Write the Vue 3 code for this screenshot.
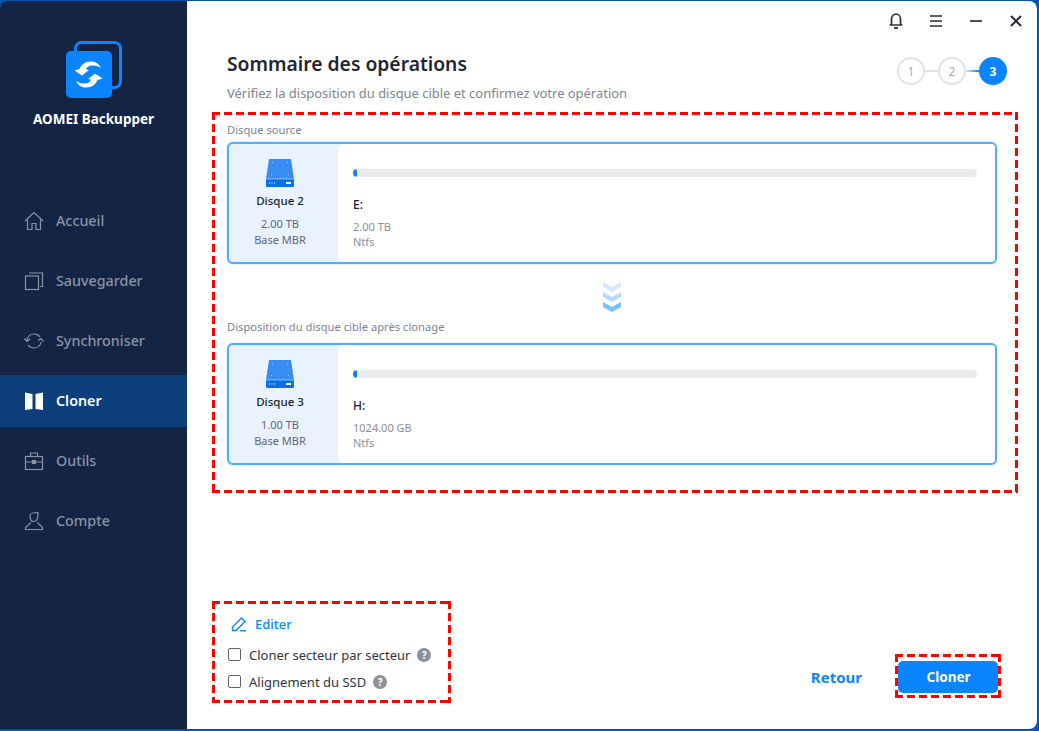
<script setup>
const nav = [
  { label: 'Accueil', icon: 'home' },
  { label: 'Sauvegarder', icon: 'backup' },
  { label: 'Synchroniser', icon: 'sync' },
  { label: 'Cloner', icon: 'clone', active: true },
  { label: 'Outils', icon: 'tools' },
  { label: 'Compte', icon: 'user' },
]
const disks = [
  { caption: 'Disque source', name: 'Disque 2', size: '2.00 TB', letter: 'E:', used: '2.00 TB' },
  { caption: 'Disposition du disque cible après clonage', name: 'Disque 3', size: '1.00 TB', letter: 'H:', used: '1024.00 GB' },
]
</script>

<template>
  <div class="window">
    <aside class="sidebar">
      <div class="brand">
        <svg class="logo" width="58" height="58" viewBox="0 0 58 58">
          <rect x="10.500" y="1.500" width="45" height="45" rx="6" fill="none" stroke="#0a84ff" stroke-width="3" />
          <rect x="1" y="10" width="46" height="47" rx="5" fill="#0a84ff" />
          <path d="M9.500 29.500 14.500 28C16 24 20 20.500 26 20.500 31 20.500 34 23 36 27 33 25 30 24.500 27 24.500 24 24.500 22 26 21 28.500L24 29 17 34.500z" fill="#fff" />
          <path d="M9.500 29.500 14.500 28C16 24 20 20.500 26 20.500 31 20.500 34 23 36 27 33 25 30 24.500 27 24.500 24 24.500 22 26 21 28.500L24 29 17 34.500z" fill="#fff" transform="rotate(180 23.500 33.500)" />
        </svg>
        <div class="brand-name">AOMEI Backupper</div>
      </div>
      <nav class="nav">
        <div v-for="item in nav" :key="item.label" class="nav-item" :class="{ active: item.active }">
          <svg width="20" height="20" viewBox="0 0 20 20" fill="none" stroke="currentColor" stroke-width="1.200" class="nav-icon">
            <template v-if="item.icon === 'home'">
              <path d="M1 10 10 1.500 19 10" />
              <path d="M3.500 8.500V18.500H8V12.500H12V18.500H16.500V8.500" />
            </template>
            <template v-else-if="item.icon === 'backup'">
              <rect x="1.500" y="5" width="13" height="13.500" />
              <path d="M5 2h13.500v13.500H16" />
            </template>
            <template v-else-if="item.icon === 'sync'">
              <path d="M3 9.500C3.500 5.500 6.500 3 10 3c2.500 0 4.500 1 6 3" />
              <path d="M17 11c-.5 3.500-3.500 6-7 6-2.500 0-4.500-1-6-3" />
              <path d="M.5 7.500 3 10.500l3-2.500M14 9.500l3-2 2.500 3" />
            </template>
            <template v-else-if="item.icon === 'clone'">
              <path d="M1 1.500 8.500 3V18L1 19z" fill="currentColor" stroke="none" />
              <path d="M19 1.500 11.500 3V18L19 19z" fill="currentColor" stroke="none" />
            </template>
            <template v-else-if="item.icon === 'tools'">
              <rect x="1.500" y="5.500" width="17" height="13" />
              <path d="M6.500 5.500v-3.500h7v3.500M1.500 11h17" />
              <rect x="8.500" y="9.500" width="3" height="3" fill="currentColor" />
            </template>
            <template v-else>
              <path d="M6 4.500C6 3 8 1.500 14 1.500c0 6-.5 9-4.500 9C7 10.500 6 8 6 4.500z" />
              <path d="M7 11.500 1.500 16.500v2h17v-2l-5-5" />
            </template>
          </svg>
          <span>{{ item.label }}</span>
        </div>
      </nav>
    </aside>

    <main class="main">
      <div class="titlebar">
        <svg width="14" height="16" viewBox="0 0 14 16" fill="none" stroke="#2f2d3a" stroke-width="1.700">
          <path d="M.500 12h13M2.500 12V6a4.500 5 0 0 1 9 0v6" />
          <path d="M5 15h4" stroke-width="1.800" />
        </svg>
        <svg width="14" height="14" viewBox="0 0 14 14" stroke="#2f2d3a" stroke-width="1.700">
          <path d="M1 2h12M1 7h12M1 12h12" />
        </svg>
        <svg width="14" height="14" viewBox="0 0 14 14" stroke="#2f2d3a" stroke-width="1.700">
          <path d="M1 7h12" />
        </svg>
        <svg width="14" height="14" viewBox="0 0 14 14" stroke="#2f2d3a" stroke-width="2">
          <path d="M2 2l10 10M12 2 2 12" />
        </svg>
      </div>

      <header class="heading">
        <div>
          <h1>Sommaire des opérations</h1>
          <p>Vérifiez la disposition du disque cible et confirmez votre opération</p>
        </div>
        <div class="steps">
          <span class="step">1</span>
          <i class="link"></i>
          <span class="step">2</span>
          <i class="link current"></i>
          <span class="step on">3</span>
        </div>
      </header>

      <section class="disks dashed">
        <template v-for="(disk, i) in disks" :key="disk.name">
          <div class="caption">{{ disk.caption }}</div>
          <div class="card">
            <div class="card-left">
              <svg width="30" height="30" viewBox="0 0 30 30">
                <path d="M4 1h22L29 21H1z" fill="#3a8cf2" />
                <rect x="1" y="20" width="28" height="9" rx="1" fill="#0a6fe8" />
                <rect x="1" y="20" width="28" height="1.500" fill="#6ab0ff" />
                <rect x="21" y="24" width="5" height="2" fill="#fff" />
                <path d="M4 24h1v2H4zM6.500 24h1v2h-1zM9 24h1v2H9z" fill="#8cc4ff" />
                <path d="M7 4h1v1H7zM22 4h1v1h-1zM6 16h1v1H6zM23 16h1v1h-1z" fill="#a9d2ff" />
              </svg>
              <div class="disk-name">{{ disk.name }}</div>
              <div class="disk-meta">{{ disk.size }}</div>
              <div class="disk-meta">Base MBR</div>
            </div>
            <div class="card-right">
              <div class="bar"><b></b></div>
              <div class="letter">{{ disk.letter }}</div>
              <div class="info">{{ disk.used }}</div>
              <div class="info">Ntfs</div>
            </div>
          </div>
          <svg v-if="i === 0" class="arrows" width="20" height="30" viewBox="0 0 20 30">
            <path d="M1 0 10 5 19 0V5L10 10 1 5z" fill="#d3e9ff" />
            <path d="M1 10 10 15 19 10V15L10 20 1 15z" fill="#b5dcff" />
            <path d="M1 20 10 25 19 20V25L10 30 1 25z" fill="#79c0ff" />
          </svg>
        </template>
      </section>

      <footer class="footer">
        <div class="options dashed">
          <div class="edit">
            <svg width="16" height="16" viewBox="0 0 16 16" fill="none" stroke="#0a84ff" stroke-width="1.400">
              <path d="M1.500 14.500V11L10.500 2l3.500 3.500-9 9z" />
              <path d="M9 14.800h6" />
            </svg>
            <span>Editer</span>
          </div>
          <label class="check"><i class="box"></i>Cloner secteur par secteur<i class="help">?</i></label>
          <label class="check"><i class="box"></i>Alignement du SSD<i class="help">?</i></label>
        </div>
        <div class="actions">
          <span class="back">Retour</span>
          <div class="primary-wrap dashed"><button class="primary">Cloner</button></div>
        </div>
      </footer>
    </main>
  </div>
</template>

<style>
html, body { margin: 0; padding: 0; background: #fff; }
</style>

<style scoped>
.window {
  width: 1039px;
  height: 731px;
  box-sizing: border-box;
  display: flex;
  background: #0b52ab;
  padding: 1px 2px 2px 0;
  font-family: "Noto Sans", "Open Sans", sans-serif;
  overflow: hidden;
}
.dashed {
  background-image:
    repeating-linear-gradient(90deg, #f00 0 8px, transparent 8px 12px),
    repeating-linear-gradient(90deg, #f00 0 8px, transparent 8px 12px),
    repeating-linear-gradient(180deg, #f00 0 8px, transparent 8px 12px),
    repeating-linear-gradient(180deg, #f00 0 8px, transparent 8px 12px);
  background-size: 100% 3px, 100% 3px, 3px 100%, 3px 100%;
  background-position: left top, left bottom, left top, right top;
  background-repeat: no-repeat;
}
.sidebar {
  width: 187px;
  flex: none;
  background: #132445;
  border-top-left-radius: 8px;
  color: #8a93a6;
}
.brand {
  height: 194px;
  box-sizing: border-box;
  padding-top: 40px;
  display: flex;
  flex-direction: column;
  align-items: center;
}
.brand-name {
  margin-top: 10px;
  font-size: 13.500px;
  line-height: 20px;
  font-weight: 700;
  color: #fff;
}
.nav { display: flex; flex-direction: column; gap: 8px; }
.nav-item {
  height: 52px;
  display: flex;
  align-items: center;
  padding-left: 24px;
  gap: 12px;
  font-size: 14.300px;
  font-weight: 500;
}
.nav-item span { margin-top: -2px; }
.nav-item.active {
  background: #0c3f7c;
  color: #fff;
  font-weight: 600;
}
.nav-icon { flex: none; }
.main {
  flex: 1;
  display: flex;
  flex-direction: column;
  background: #fff;
  border-top-right-radius: 8px;
  border-bottom-right-radius: 8px;
  min-width: 0;
}
.titlebar {
  height: 39px;
  display: flex;
  justify-content: flex-end;
  align-items: center;
  gap: 26px;
  padding-right: 14px;
}
.titlebar svg { flex: none; }
.heading {
  height: 72px;
  display: flex;
  justify-content: space-between;
  padding: 0 30px 0 40px;
}
.heading h1 {
  margin: 10px 0 0;
  font-size: 19.300px;
  line-height: 28px;
  font-weight: 600;
  color: #1f2533;
}
.heading p {
  margin: 5px 0 0;
  font-size: 12.950px;
  line-height: 20px;
  color: #7c8392;
}
.steps {
  display: flex;
  align-items: center;
  height: 28px;
  margin-top: 17px;
}
.step {
  width: 28px;
  height: 28px;
  box-sizing: border-box;
  border: 2px solid #dfe3ea;
  border-radius: 50%;
  display: flex;
  align-items: center;
  justify-content: center;
  font-size: 12px;
  color: #a3abc4;
}
.step.on {
  background: #0a84ff;
  border-color: #0a84ff;
  color: #fff;
  font-weight: 700;
}
.link { width: 13px; height: 2px; background: #dfe3ea; }
.link.current { background: linear-gradient(90deg, #dfe3ea, #0a84ff); }
.disks {
  margin-left: 25px;
  width: 806px;
  height: 381px;
  box-sizing: border-box;
  padding: 9px 21px 3px 15px;
  display: flex;
  flex-direction: column;
}
.caption {
  font-size: 11.200px;
  line-height: 18px;
  height: 18px;
  color: #7c8392;
  margin-bottom: 3px;
}
.arrows + .caption { margin-bottom: 7px; }
.card {
  height: 122px;
  box-sizing: border-box;
  width: 770px;
  flex: none;
  border: 2px solid #55abff;
  box-shadow: 0 0 1.500px #7cc0ff;
  border-radius: 6px;
  display: flex;
  overflow: hidden;
  background: #e8f3ff;
}
.card-left {
  width: 109px;
  display: flex;
  flex-direction: column;
  align-items: center;
  padding: 14px 7px 0 0;
  box-sizing: border-box;
}
.disk-name {
  margin-top: 3px;
  margin-bottom: 5px;
  font-size: 11.500px;
  line-height: 20px;
  font-weight: 500;
  color: #1a1f2b;
}
.disk-meta {
  font-size: 11px;
  line-height: 16px;
  color: #5f6675;
}
.card-right {
  flex: 1;
  padding: 25px 18px 0 15px;
  background: #fff;
  border-radius: 6px 0 0 6px;
}
.bar {
  height: 8px;
  background: #ebebeb;
  border-radius: 4px;
  overflow: hidden;
}
.bar b {
  display: block;
  width: 4px;
  height: 8px;
  background: #0a84ff;
  border-radius: 4px;
}
.letter {
  margin-top: 19px;
  margin-bottom: 5px;
  font-size: 12px;
  line-height: 18px;
  font-weight: 500;
  color: #1a1f2b;
}
.info {
  font-size: 11px;
  line-height: 15px;
  color: #8a8f99;
}
.arrows {
  align-self: center;
  margin: 18px 0 6px;
  flex: none;
}
.footer {
  margin-top: auto;
  padding: 0 36px 26px 25px;
  display: flex;
  justify-content: space-between;
  align-items: flex-end;
}
.options {
  width: 239px;
  height: 102px;
  box-sizing: border-box;
  padding: 11px 0 0 16px;
}
.edit {
  display: flex;
  align-items: center;
  gap: 8px;
  height: 24px;
  padding-left: 3px;
  margin-bottom: 5px;
  color: #0a84ff;
  font-size: 13px;
  font-weight: 500;
}
.check {
  display: flex;
  align-items: center;
  height: 27px;
  font-size: 13px;
  color: #2f3440;
}
.box {
  width: 11px;
  height: 11px;
  border: 1.500px solid #5c6270;
  border-radius: 2px;
  margin-right: 8px;
  flex: none;
}
.help {
  width: 14px;
  height: 14px;
  margin-left: 7px;
  border-radius: 50%;
  background: #8c919c;
  color: #fff;
  font-size: 10px;
  font-style: normal;
  font-weight: 700;
  display: flex;
  align-items: center;
  justify-content: center;
}
.actions {
  display: flex;
  align-items: center;
  gap: 33px;
  margin-bottom: 5px;
}
.back {
  color: #0a84ff;
  font-size: 15px;
  font-weight: 700;
  margin-top: 2px;
}
.primary-wrap {
  padding: 7px 3px;
  width: 106px;
  height: 44px;
  box-sizing: border-box;
}
.primary {
  display: block;
  width: 100px;
  height: 32px;
  border: none;
  border-radius: 5px;
  background: #0a84ff;
  color: #fff;
  font: 700 13.500px "Noto Sans", sans-serif;
  padding: 0 0 0 1px;
}
</style>
